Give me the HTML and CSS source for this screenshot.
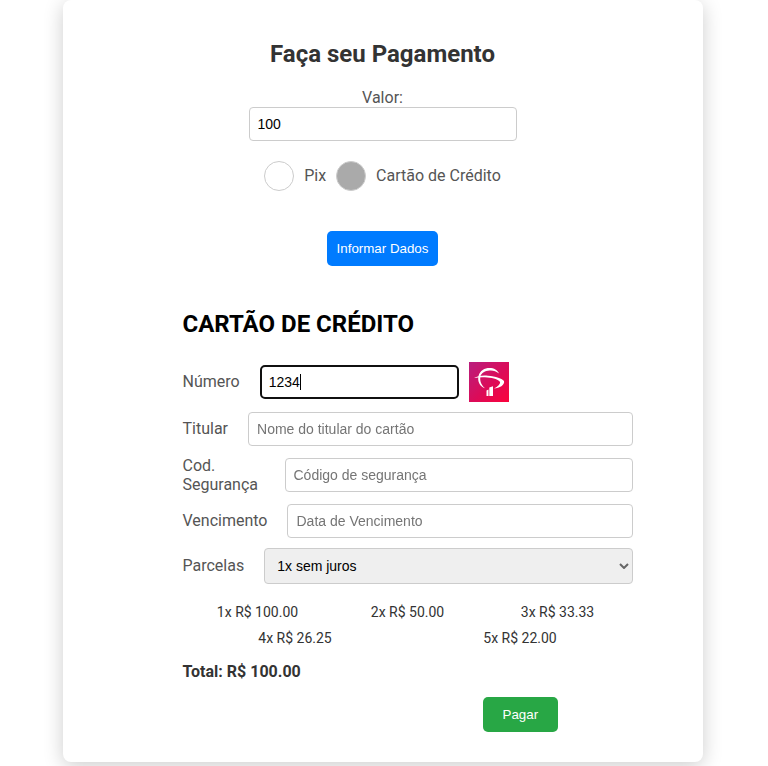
FILE: index.html
```html
<!DOCTYPE html>
<html lang="pt-BR">
<head>
<meta charset="utf-8">
<title>Pagamento</title>
<link rel="stylesheet" href="styles.css">
</head>
<body>
<main class="card">
  <form class="payment">
    <h1 class="title">Faça seu Pagamento</h1>
    <label class="label" for="valor">Valor:</label>
    <input class="field amount" id="valor" type="text" value="100">
    <div class="methods">
      <input class="radio" type="radio" name="metodo" id="pix">
      <label class="label" for="pix">Pix</label>
      <input class="radio" type="radio" name="metodo" id="cartao" checked>
      <label class="label" for="cartao">Cartão de Crédito</label>
    </div>
    <button class="button" type="button">Informar Dados</button>
  </form>
  <form class="credit">
    <h2 class="subtitle">CARTÃO DE CRÉDITO</h2>
    <div class="row">
      <label class="label" for="numero">Número</label>
      <input class="field number" id="numero" type="text" value="1234" autofocus>
      <svg class="brand" viewBox="0 0 40 40" aria-hidden="true">
        <defs><linearGradient id="g" x1="0" y1="0" x2="1" y2="1"><stop offset="0" stop-color="#b81f7e"/><stop offset=".55" stop-color="#dc0b58"/><stop offset="1" stop-color="#fb033c"/></linearGradient></defs>
        <path fill="url(#g)" d="M0 0h40v40H0z"/>
        <path fill="#fff" d="M9.500 14C11 8.500 15.500 6 20.500 6c4.500 0 8 2 9.500 5.500-3-2.500-6-3.300-9.500-3-4.500.3-8 2.500-9 5.500-1 4.500.5 9 4.500 12.200C10.500 24.500 8.300 19 9.500 14z"/>
        <path fill="#fff" d="M5 16c3.500-2 8.500-3 14-2.300 7.500.8 14.500 2.800 16 5.300 1 4-4.500 7.300-10 7.500 4-2 6.500-4.800 6-6.500-1-2.300-6.500-4-12.500-4.500C14 15 9 15.200 5 16z"/>
        <path fill="#fff" d="M17.500 28.500l2-1V34h-2zM20.300 25.500l3.700-1.200V34h-3.700z"/>
      </svg>
    </div>
    <div class="row">
      <label class="label" for="titular">Titular</label>
      <input class="field" id="titular" type="text" placeholder="Nome do titular do cartão">
    </div>
    <div class="row">
      <label class="label code-label" for="codigo">Cod. Segurança</label>
      <input class="field" id="codigo" type="text" placeholder="Código de segurança">
    </div>
    <div class="row">
      <label class="label" for="vencimento">Vencimento</label>
      <input class="field" id="vencimento" type="text" placeholder="Data de Vencimento">
    </div>
    <div class="row">
      <label class="label" for="parcelas">Parcelas</label>
      <div class="select-box">
        <select class="field select" id="parcelas"><option>1x sem juros</option></select>
        <svg class="chevron" viewBox="0 0 10 6" aria-hidden="true"><path d="M1 1l4 4 4-4"/></svg>
      </div>
    </div>
    <ul class="plans">
      <li>1x R$ 100.00</li><li>2x R$ 50.00</li><li>3x R$ 33.33</li><li>4x R$ 26.25</li><li>5x R$ 22.00</li>
    </ul>
    <p class="total">Total: R$ 100.00</p>
    <button class="button pay" type="submit">Pagar</button>
  </form>
</main>
</body>
</html>
```
FILE: styles.css
```css
* { box-sizing: border-box; }
body { margin: 0; padding: 0 3px 4px 0; background: #fff; font-family: Roboto, sans-serif; font-size: 16px; color: #333; }
.card { max-width: 640px; margin: 0 auto; padding: 40px 70px 30px 120px; border-radius: 8px; box-shadow: 0 4px 20px rgba(0, 0, 0, 0.2); background: #fff; }
.payment { display: flex; flex-direction: column; align-items: center; margin-right: 50px; }
.title { margin: 0 0 20px; font-size: 24px; line-height: 28px; }
.label { color: #555; line-height: 19px; }
.field { flex: 1; min-width: 0; height: 34px; padding: 8px; border: 1px solid #ccc; border-radius: 4px; font-family: "Liberation Sans", Arial, sans-serif; font-size: 14px; color: #000; background: #fff; }
.amount { flex: none; width: 268px; }
.methods { display: flex; align-items: center; gap: 10px; margin: 20px 0 40px; }
.methods .label, .row .label { padding-bottom: 2px; }
.radio { appearance: none; width: 30px; height: 30px; margin: 0; border: 1px solid #ccc; border-radius: 50%; background: #fff; }
.radio:checked { background: #aaa; }
.button { height: 35px; padding: 0 10px; border: 0; border-radius: 5px; background: #007bff; color: #fff; font-family: "Liberation Sans", Arial, sans-serif; }
.subtitle { margin: 44px 0 24px; font-size: 24px; line-height: 28px; color: #000; }
.row { display: flex; align-items: center; gap: 20px; margin-bottom: 10px; }
.number { flex: none; width: 199px; background: linear-gradient(#000, #000) 39px center / 1px 16px no-repeat #fff; }
.brand { width: 40px; height: 40px; margin-left: -10px; }
.row .code-label { flex: 0 0 82px; padding-bottom: 0; }
.select-box { position: relative; display: flex; flex: 1; }
.select { height: 36px; padding: 8px 12px; appearance: none; background: #efefef; }
.chevron { position: absolute; right: 4px; top: 15px; width: 10px; height: 6px; fill: none; stroke: #666; stroke-width: 2; pointer-events: none; }
.plans { display: flex; flex-wrap: wrap; margin: 15px 0 11px; padding: 0; list-style: none; font-size: 14px; line-height: 16px; text-align: center; }
.plans li { flex: 1 1 30%; padding: 5px 0; }
.total { margin: 0 0 16px; font-weight: bold; }
.pay { display: block; margin-left: 300px; padding: 0 20px; background: #28a745; }
```
